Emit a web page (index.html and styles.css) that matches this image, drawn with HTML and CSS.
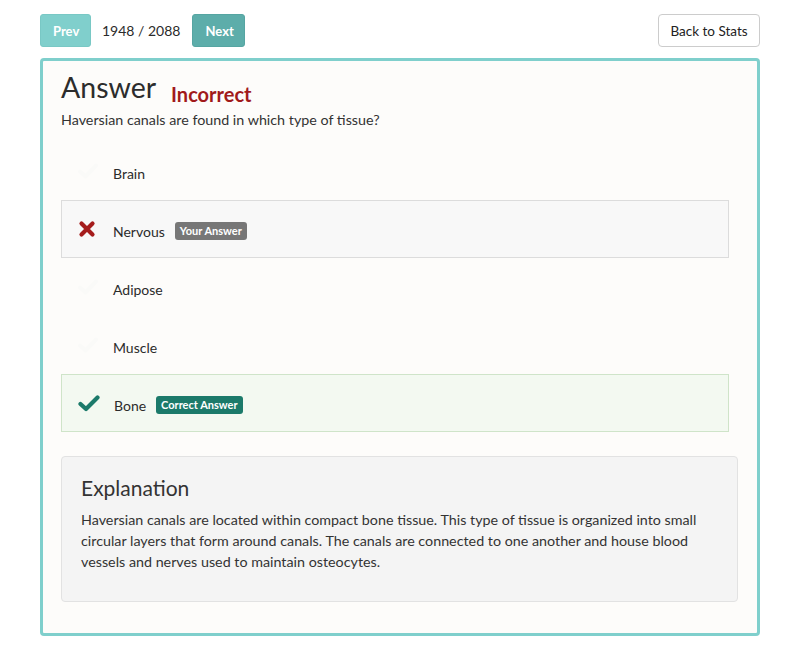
FILE: index.html
```html
<!DOCTYPE html>
<html>
<head>
<meta charset="utf-8">
<link rel="stylesheet" href="styles.css">
</head>
<body>
<div class="page">
  <div class="topbar">
    <div class="nav">
      <button class="btn btn-prev">Prev</button>
      <span class="counter">1948 / 2088</span>
      <button class="btn btn-next">Next</button>
    </div>
    <button class="btn-back">Back to Stats</button>
  </div>
  <div class="card">
    <div class="heading">
      <h1 class="title">Answer</h1>
      <span class="status">Incorrect</span>
    </div>
    <p class="question">Haversian canals are found in which type of tissue?</p>
    <ul class="options">
      <li class="option">
        <span class="icon"><svg width="20" height="16" viewBox="0 0 20 16"><path d="M2 8.5 L7.5 13.5 L18 2.5" fill="none" stroke="#fafaf8" stroke-width="4" stroke-linecap="round" stroke-linejoin="round"/></svg></span>
        <span class="label">Brain</span>
      </li>
      <li class="option wrong">
        <span class="icon"><svg width="18" height="18" viewBox="0 0 18 18"><path d="M3.5 3.5 L14.5 14.5 M14.5 3.5 L3.5 14.5" fill="none" stroke="#a51c1c" stroke-width="4.2" stroke-linecap="round"/></svg></span>
        <span class="label">Nervous</span>
        <span class="badge badge-gray">Your Answer</span>
      </li>
      <li class="option">
        <span class="icon"><svg width="20" height="16" viewBox="0 0 20 16"><path d="M2 8.5 L7.5 13.5 L18 2.5" fill="none" stroke="#fafaf8" stroke-width="4" stroke-linecap="round" stroke-linejoin="round"/></svg></span>
        <span class="label">Adipose</span>
      </li>
      <li class="option">
        <span class="icon"><svg width="20" height="16" viewBox="0 0 20 16"><path d="M2 8.5 L7.5 13.5 L18 2.5" fill="none" stroke="#fafaf8" stroke-width="4" stroke-linecap="round" stroke-linejoin="round"/></svg></span>
        <span class="label">Muscle</span>
      </li>
      <li class="option right">
        <span class="icon"><svg width="22" height="17" viewBox="0 0 22 17"><path d="M2.5 9 L8 14 L19.5 2.5" fill="none" stroke="#1b7a6a" stroke-width="4.2" stroke-linecap="round" stroke-linejoin="round"/></svg></span>
        <span class="label">Bone</span>
        <span class="badge badge-green">Correct Answer</span>
      </li>
    </ul>
    <div class="explanation">
      <h2 class="exp-title">Explanation</h2>
      <p class="exp-text">Haversian canals are located within compact bone tissue. This type of tissue is organized into small circular layers that form around canals. The canals are connected to one another and house blood vessels and nerves used to maintain osteocytes.</p>
    </div>
  </div>
</div>
</body>
</html>
```

FILE: styles.css
```css
* { box-sizing: border-box; }
html, body { margin: 0; padding: 0; background: #ffffff; }
body {
  font-family: Lato, "Open Sans", sans-serif;
  color: #2b2b2b;
  font-size: 14px;
}
.page {
  padding: 14px 40px 0 40px;
}
.topbar {
  display: flex;
  justify-content: space-between;
  align-items: center;
}
.nav {
  display: flex;
  align-items: center;
}
.btn {
  height: 33px;
  border: 1px solid transparent;
  border-radius: 3px;
  color: #ffffff;
  font-family: Lato, sans-serif;
  font-weight: 700;
  font-size: 13px;
  padding: 0 12px;
  cursor: pointer;
}
.btn-prev {
  width: 51px;
  background: #80cfcc;
  border-color: #79c8c5;
}
.btn-next {
  width: 53px;
  background: #5dadaa;
  border-color: #56a5a2;
}
.counter {
  font-size: 14px;
  color: #2b2b2b;
  margin: 0 12px 0 11px;
}
.btn-back {
  height: 33px;
  width: 102px;
  background: #ffffff;
  border: 1px solid #cccccc;
  border-radius: 4px;
  font-family: Lato, sans-serif;
  font-size: 13.5px;
  color: #222;
  padding: 0;
}
.card {
  margin-top: 11px;
  border: 3px solid #7fcfcc;
  border-radius: 4px;
  background: #fdfcfa;
  padding: 10px 19px 31px 18px;
  height: 578px;
}
.heading {
  display: flex;
  align-items: baseline;
}
.title {
  margin: 0;
  font-size: 28.5px;
  font-weight: 400;
  line-height: 33px;
  color: #2c2c2c;
}
.status {
  margin-left: 15px;
  font-size: 20px;
  font-weight: 700;
  color: #a11a1a;
  position: relative;
  top: 4px;
}
.question {
  margin: 6px 0 0 0;
  line-height: 20px;
  font-size: 14.3px;
  color: #333;
}
.options {
  list-style: none;
  margin: 12px 9px 0 0;
  padding: 0;
}
.option {
  display: flex;
  align-items: center;
  height: 58px;
  border: 1px solid transparent;
  padding: 4px 0 0 16px;
  font-size: 14px;
  color: #2b2b2b;
}
.option.wrong {
  background: #f8f8f8;
  border-color: #dcdcdc;
}
.option.right {
  background: #f3f9f1;
  border-color: #cfe4c9;
}
.icon {
  width: 22px;
  display: flex;
  align-items: center;
  justify-content: flex-start;
  margin-right: 13px;
  position: relative;
  top: -2px;
}
.option.right .icon { margin-right: 14px; }
.badge {
  margin-left: 10px;
  height: 18px;
  line-height: 18px;
  padding: 0 5px;
  border-radius: 3px;
  color: #ffffff;
  font-size: 11px;
  font-weight: 700;
}
.badge-gray { background: #777777; }
.badge-green { background: #1b7a6a; }
.explanation {
  margin-top: 24px;
  background: #f4f4f4;
  border: 1px solid #e2e2e2;
  border-radius: 4px;
  padding: 19px 19px 29px 19px;
}
.exp-title {
  margin: 0;
  font-size: 21px;
  font-weight: 400;
  line-height: 24px;
  color: #333;
}
.exp-text {
  margin: 9px 0 0 0;
  line-height: 21px;
  font-size: 14.3px;
  color: #333;
}
```
